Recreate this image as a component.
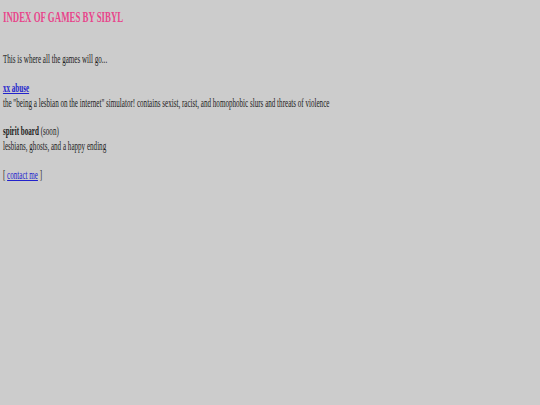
export default function App() {
  return (
    <div className="min-h-[405px] overflow-hidden bg-[#cccccc] font-['Liberation_Serif',serif] text-[12px] leading-[15px] text-[#222222]">
      <div className="w-[900px] origin-top-left scale-x-[0.59] px-[5px] pt-[9px]">
        <h1 className="text-[15px] font-bold leading-[16px] text-[#e8458b]">INDEX OF GAMES BY SIBYL</h1>
        <p className="mt-[27px]">This is where all the games will go...</p>
        <p className="mt-[14px]">
          <a href="#" className="font-bold text-[#2222cc] underline">xx abuse</a>
          <br />
          the "being a lesbian on the internet" simulator! contains sexist, racist, and homophobic slurs and threats of violence
        </p>
        <p className="mt-[13px]">
          <b>spirit board</b> (soon)
          <br />
          lesbians, ghosts, and a happy ending
        </p>
        <p className="mt-[14px]">
          [ <a href="#" className="text-[#2222cc] underline">contact me</a> ]
        </p>
      </div>
    </div>
  );
}
